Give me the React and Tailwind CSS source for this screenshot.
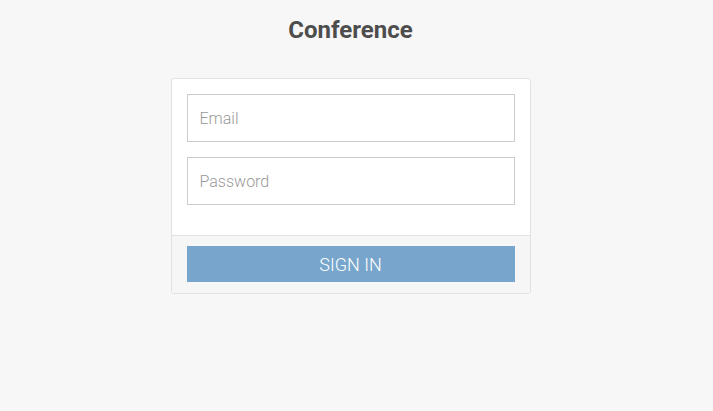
import React from 'react';

const App = () => {
  return (
    <div className="min-h-[411px] bg-[#f7f7f7] font-['Roboto',sans-serif] pt-[16px] pr-[12px]">
      <h1 className="text-center text-[24px] leading-[28px] font-bold text-[#4d4d4d]">
        Conference
      </h1>

      <div className="mx-auto mt-[34px] w-[360px] bg-white border border-[#e2e2e2] rounded-[3px]">
        {/* Fields */}
        <div className="px-[15px] pt-[15px] pb-[30px] flex flex-col gap-[15px]">
          <input
            type="email"
            placeholder="Email"
            className="h-[48px] w-full border border-[#cccccc] px-[12px] text-[16px] font-light text-[#555] placeholder:text-[#999] outline-none"
          />
          <input
            type="password"
            placeholder="Password"
            className="h-[48px] w-full border border-[#cccccc] px-[12px] text-[16px] font-light text-[#555] placeholder:text-[#999] outline-none"
          />
        </div>

        {/* Footer */}
        <div className="border-t border-[#e2e2e2] bg-[#f6f6f6] px-[15px] pt-[10px] pb-[11px] rounded-b-[3px]">
          <button className="h-[36px] w-full bg-[#77a5cb] text-white text-[18px] font-light uppercase">
            Sign in
          </button>
        </div>
      </div>
    </div>
  );
};

export default App;
